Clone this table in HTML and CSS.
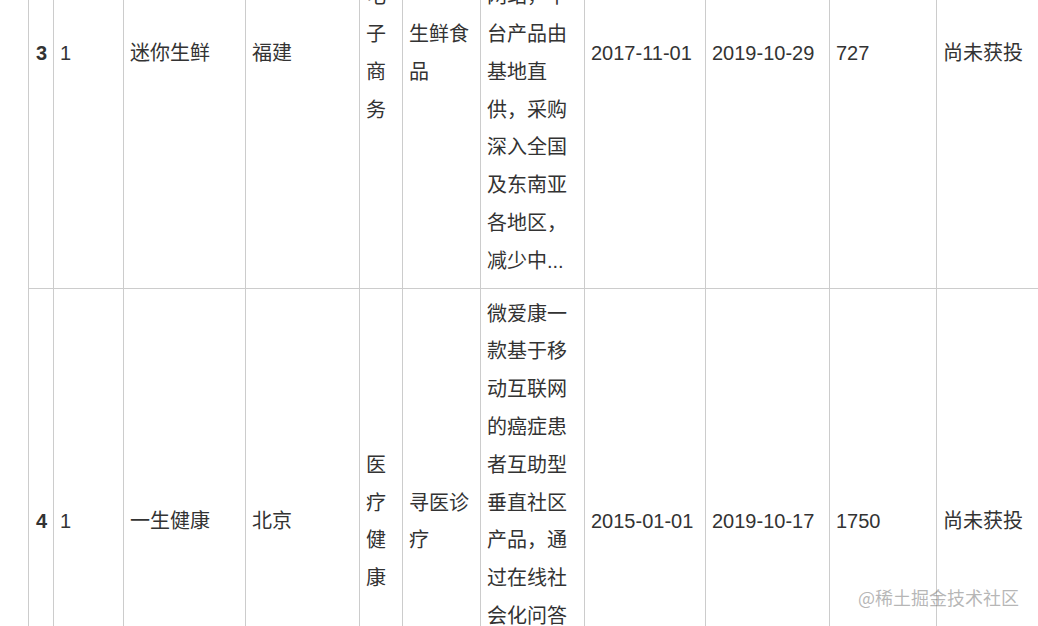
FILE: index.html
```html
<!DOCTYPE html>
<html lang="zh-CN">
<head>
<meta charset="utf-8">
<title>项目列表</title>
<link rel="stylesheet" href="styles.css">
</head>
<body>
<div class="page">
  <table class="data">
    <colgroup>
      <col class="c-idx"><col class="c-n"><col class="c-name"><col class="c-prov"><col class="c-ind"><col class="c-sub"><col class="c-desc"><col class="c-d1"><col class="c-d2"><col class="c-num"><col class="c-stat">
    </colgroup>
    <tbody>
      <tr>
        <th class="idx">3</th>
        <td>1</td>
        <td>迷你生鲜</td>
        <td>福建</td>
        <td>电子商务</td>
        <td>生鲜食品</td>
        <td>迷你生鲜是福建一家专业的生鲜电商网站，平台产品由基地直供，采购深入全国及东南亚各地区，减少中...</td>
        <td>2017-11-01</td>
        <td>2019-10-29</td>
        <td>727</td>
        <td>尚未获投</td>
      </tr>
      <tr>
        <th class="idx">4</th>
        <td>1</td>
        <td>一生健康</td>
        <td>北京</td>
        <td>医疗健康</td>
        <td>寻医诊疗</td>
        <td>微爱康一款基于移动互联网的癌症患者互助型垂直社区产品，通过在线社会化问答平台帮助癌症患者获取信...</td>
        <td>2015-01-01</td>
        <td>2019-10-17</td>
        <td>1750</td>
        <td>尚未获投</td>
      </tr>
    </tbody>
  </table>
  <div class="watermark">@稀土掘金技术社区</div>
</div>
</body>
</html>
```
FILE: styles.css
```css
html, body {
  margin: 0;
  padding: 0;
  background: #fff;
  overflow: hidden;
}
.page {
  position: relative;
  width: 1038px;
  height: 626px;
  overflow: hidden;
}
.data {
  margin: -181px 0 0 28px;
  border-collapse: collapse;
  table-layout: fixed;
  width: 1038px;
  font-family: "Liberation Sans", "Noto Sans CJK SC", sans-serif;
  font-size: 20px;
  line-height: 37.8px;
  color: #333;
}
.data td, .data th {
  border: 1px solid #ccc;
  padding: 7px 6px;
  vertical-align: middle;
  text-align: left;
  font-weight: normal;
  word-break: break-all;
}
.data th.idx {
  font-weight: bold;
  padding: 7px 0 7px 7px;
}
.c-idx { width: 25px; }
.c-n { width: 70px; }
.c-name { width: 122px; }
.c-prov { width: 114px; }
.c-ind { width: 43px; }
.c-sub { width: 78px; }
.c-desc { width: 104px; }
.c-d1 { width: 121px; }
.c-d2 { width: 124px; }
.c-num { width: 107px; }
.c-stat { width: 130px; }
.watermark {
  position: absolute;
  right: 19px;
  bottom: 17px;
  font-family: "Noto Sans CJK SC", sans-serif;
  font-size: 18px;
  line-height: 24px;
  color: rgba(110, 110, 110, 0.5);
}
```
